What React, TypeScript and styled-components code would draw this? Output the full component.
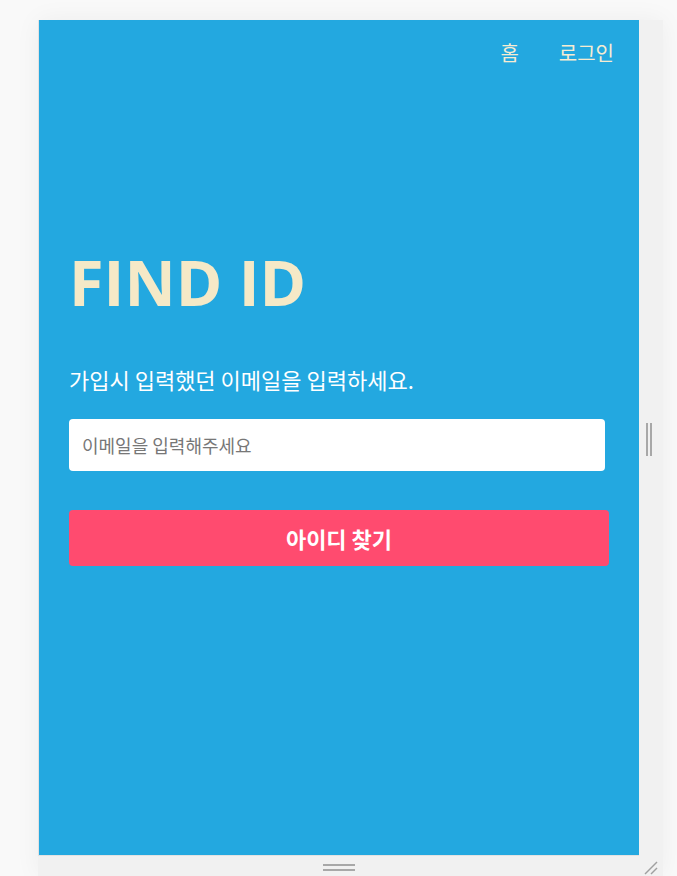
import React from "react";
import styled, { createGlobalStyle } from "styled-components";

const GlobalStyle = createGlobalStyle`
  html, body { margin: 0; padding: 0; }
  body {
    background: #f9f9f9;
    font-family: "Noto Sans CJK KR", "Noto Sans", sans-serif;
    overflow: hidden;
  }
`;

const Stage = styled.div`
  padding: 20px 0 0 38px;
  height: 876px;
  box-sizing: border-box;
`;

const Frame = styled.div`
  width: 625px;
  height: 856px;
  display: flex;
  flex-direction: column;
  background: #f1f1f1;
  box-shadow: 0 0 24px rgba(0, 0, 0, 0.05);
`;

const FrameRow = styled.div`
  display: flex;
  height: 836px;
`;

const Panel = styled.div`
  width: 601px;
  box-sizing: border-box;
  background: #23a8e0;
  border-left: 1px solid #e2e2e2;
  border-bottom: 1px solid #e2e2e2;
  display: flex;
  flex-direction: column;
`;

const SideHandle = styled.div`
  flex: 1;
  display: flex;
  align-items: center;
  justify-content: center;
  gap: 2px;
  padding-right: 5px;
  padding-top: 2px;
`;

const VBar = styled.span`
  width: 2px;
  height: 33px;
  background: #a8a8a8;
`;

const BottomStrip = styled.div`
  flex: 1;
  position: relative;
  display: flex;
  flex-direction: column;
  align-items: center;
  justify-content: center;
  gap: 3px;
  padding-right: 24px;
  padding-top: 2px;
`;

const HBar = styled.span`
  width: 32px;
  height: 2px;
  background: #a8a8a8;
`;

const Corner = styled.svg`
  position: absolute;
  right: 4px;
  bottom: 1px;
`;

const Nav = styled.nav`
  display: flex;
  justify-content: flex-end;
  gap: 40px;
  padding: 19px 25px 0 0;
`;

const NavLink = styled.a`
  color: #f6ecd2;
  font-size: 20px;
  line-height: 28px;
  text-decoration: none;
`;

const Content = styled.div`
  padding: 0 30px;
  display: flex;
  flex-direction: column;
`;

const Title = styled.h1`
  margin: 175px 0 0;
  font-family: "Open Sans", "Noto Sans", sans-serif;
  font-weight: 700;
  font-size: 63px;
  line-height: 80px;
  color: #f5e9c7;
`;

const Subtitle = styled.p`
  margin: 42px 0 0;
  font-size: 22px;
  line-height: 30px;
  color: #ffffff;
`;

const EmailInput = styled.input`
  margin-top: 25px;
  width: 536px;
  height: 52px;
  box-sizing: border-box;
  border: none;
  border-radius: 4px;
  padding: 0 13px;
  font-family: "Noto Sans CJK KR", "Noto Sans", sans-serif;
  font-size: 18px;
  background: #ffffff;
  outline: none;
  &::placeholder {
    color: #777777;
  }
`;

const SubmitButton = styled.button`
  margin-top: 39px;
  width: 540px;
  height: 56px;
  border: none;
  border-radius: 4px;
  background: #ff4b6f;
  color: #ffffff;
  font-family: "Noto Sans CJK KR", "Noto Sans", sans-serif;
  font-weight: 700;
  font-size: 22px;
  cursor: pointer;
`;

export default function App() {
  return (
    <>
      <GlobalStyle />
      <Stage>
        <Frame>
          <FrameRow>
            <Panel>
              <Nav>
                <NavLink href="#">홈</NavLink>
                <NavLink href="#">로그인</NavLink>
              </Nav>
              <Content>
                <Title>FIND ID</Title>
                <Subtitle>가입시 입력했던 이메일을 입력하세요.</Subtitle>
                <EmailInput type="email" placeholder="이메일을 입력해주세요" />
                <SubmitButton type="button">아이디 찾기</SubmitButton>
              </Content>
            </Panel>
            <SideHandle>
              <VBar />
              <VBar />
            </SideHandle>
          </FrameRow>
          <BottomStrip>
            <HBar />
            <HBar />
            <Corner width="16" height="16" viewBox="0 0 16 16">
              <line x1="2" y1="15" x2="14" y2="3" stroke="#a0a0a0" strokeWidth="1.5" />
              <line x1="8" y1="15" x2="14" y2="9" stroke="#a0a0a0" strokeWidth="1.5" />
            </Corner>
          </BottomStrip>
        </Frame>
      </Stage>
    </>
  );
}
